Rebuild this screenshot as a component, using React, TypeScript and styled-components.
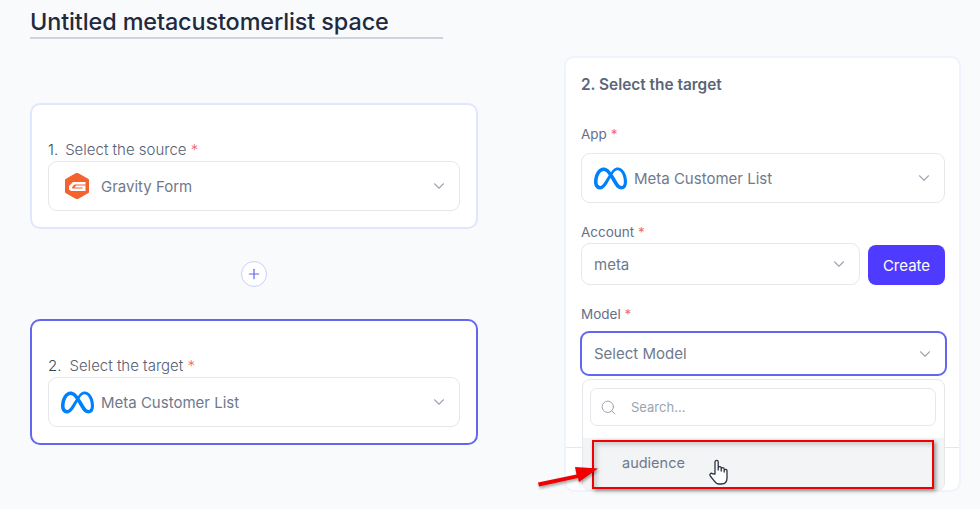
import React from 'react';
import styled, { createGlobalStyle } from 'styled-components';
import { ChevronDown, Plus, Search } from 'lucide-react';
import { SiMeta } from 'react-icons/si';

const GlobalStyle = createGlobalStyle`
    html, body {
        margin: 0;
        padding: 0;
        background: #f9fafc;
        font-family: Inter, "Noto Sans", sans-serif;
    }
    * { box-sizing: border-box; }
`
const Page = styled.div`
    position: relative;
    width: 980px;
    height: 509px;
    overflow: hidden;
    display: flex;
    align-items: flex-start;
    background: #f9fafc;
`
const LeftColumn = styled.div`
    width: 534px;
    margin-left: 30px;
    display: flex;
    flex-direction: column;
    flex: none;
`
const Title = styled.h1`
    width: 413px;
    height: 39px;
    margin: 0 0 64px;
    padding-top: 7px;
    border-bottom: 2px solid #d0d2dc;
    font-size: 23.4px;
    line-height: 30px;
    font-weight: 500;
    letter-spacing: -0.1px;
    white-space: nowrap;
    color: #1f2a3e;
`
const FlowCard = styled.section<{ $active?: boolean }>`
    width: 448px;
    height: 126px;
    padding: 33px 16px 0;
    background: #fff;
    border: 2px solid ${p => (p.$active ? '#6366f1' : '#e0e6fe')};
    border-radius: 10px;
`
const FlowLabel = styled.label`
    display: block;
    height: 23px;
    font-size: 15px;
    line-height: 24px;
    font-weight: 300;
    color: #566072;
`
const Number = styled.span<{ $gap: number }>`
    margin-right: ${p => p.$gap}px;
    color: #3d4654;
`
const Star = styled.span`
    color: #f26b6b;
`
const Select = styled.div<{ $h?: number; $focus?: boolean; $pad?: number }>`
    height: ${p => p.$h ?? 50}px;
    padding: 0 11px 0 ${p => p.$pad ?? 12}px;
    display: flex;
    align-items: center;
    background: #fff;
    border: ${p => (p.$focus ? '2px solid #6366f1' : '1px solid #e5e7eb')};
    border-radius: 9px;
    font-size: 15px;
    font-weight: 400;
    color: #6f798c;
`
const SelectText = styled.span`
    flex: 1;
`
const LogoSlot = styled.span<{ $w: number }>`
    width: ${p => p.$w}px;
    flex: none;
    display: flex;
    align-items: center;
`
const Connector = styled.div`
    width: 448px;
    height: 90px;
    display: flex;
    align-items: center;
    justify-content: center;
`
const PlusButton = styled.button`
    width: 26px;
    height: 26px;
    padding: 0;
    display: flex;
    align-items: center;
    justify-content: center;
    background: #fff;
    border: 1px solid #c9cffb;
    border-radius: 50%;
    color: #6366f1;
`
const Panel = styled.aside`
    position: relative;
    width: 397px;
    height: 436px;
    margin-top: 56px;
    padding: 16px 14px 0 15px;
    background: #fff;
    border: 2px solid #f0f2fd;
    border-radius: 10px;
`
const PanelTitle = styled.h2`
    margin: 0 0 28px;
    font-size: 15.4px;
    line-height: 22px;
    font-weight: 600;
    color: #5b6678;
`
const FieldLabel = styled.label<{ $mb: number }>`
    display: block;
    margin-bottom: ${p => p.$mb}px;
    font-size: 13.5px;
    line-height: 20px;
    color: #64708a;
`
const Field = styled.div<{ $mb: number }>`
    margin-bottom: ${p => p.$mb}px;
`
const AccountRow = styled.div`
    display: flex;
    align-items: flex-end;
    gap: 8px;
`
const AccountSelect = styled(Select)`
    width: 279px;
`
const CreateButton = styled.button`
    width: 77px;
    height: 40px;
    background: #4f3bff;
    border: 0;
    border-radius: 8px;
    font-family: inherit;
    font-size: 15px;
    color: #fff;
`
const ModelSelect = styled(Select)`
    width: 367px;
    margin-left: -1px;
`
const Divider = styled.div`
    position: absolute;
    left: 0;
    right: 0;
    top: 389px;
    height: 1px;
    background: #e5e7eb;
`
const Dropdown = styled.div`
    position: absolute;
    left: 16px;
    top: 321px;
    width: 363px;
    height: 112px;
    padding: 8px 8px 0 7px;
    background: #fff;
    border: 1px solid #e5e7eb;
    border-radius: 8px;
    overflow: hidden;
`
const SearchBox = styled.div`
    height: 38px;
    padding-left: 9px;
    display: flex;
    align-items: center;
    gap: 14px;
    border: 1px solid #e5e7eb;
    border-radius: 7px;
    font-size: 13px;
    color: #9ca3af;
`
const Option = styled.div`
    height: 52px;
    margin: 12px -8px 0 -7px;
    padding: 15px 0 0 39px;
    background: #f3f4f6;
    font-size: 14.5px;
    line-height: 20px;
    color: #6f798c;
`
const Highlight = styled.div`
    position: absolute;
    left: 592px;
    top: 440px;
    width: 342px;
    height: 49px;
    border: 2px solid #f00000;
    box-shadow: 2px 2px 4px rgba(0, 0, 0, 0.4), inset 3px 3px 4px rgba(0, 0, 0, 0.16);
`
const ArrowSvg = styled.svg`
    position: absolute;
    left: 538px;
    top: 465px;
    overflow: visible;
    filter: drop-shadow(1px 2px 1.5px rgba(0, 0, 0, 0.35));
`
const HandSvg = styled.svg`
    position: absolute;
    left: 708px;
    top: 458px;
    overflow: visible;
`

const ArrowMark = () => (
    <ArrowSvg width="62" height="24" viewBox="0 0 62 24">
        <path d="M0 17.5 L38.5 9.5 L37 2 L60 3.5 L41 17 L40 13 L1 21.5 Z" fill="#f00000" />
    </ArrowSvg>
)

const HandCursor = () => (
    <HandSvg width="22" height="28" viewBox="0 0 22 28">
        <path
            d="M7 16 V4 a1.6 1.6 0 0 1 3.2 0 V12 V10 a1.5 1.5 0 0 1 3 .3 V13 V11 a1.5 1.5 0 0 1 3 .3 V14 V12.6 a1.4 1.4 0 0 1 2.8 .2 V20 c0 3.5-2 6-5.5 6 H11 c-2.5 0-3.6-1.3-5-3.4 L2.3 18 c-1.4-2 .8-3.6 2.4-2.1 Z"
            fill="#fff"
            stroke="#2a3240"
            strokeWidth="1.3"
            strokeLinejoin="round"
        />
    </HandSvg>
)

const GravityLogo = () => (
    <svg width="24" height="26" viewBox="0 0 24 26">
        <path d="M12 0 L23.5 6.5 V19.5 L12 26 L.5 19.5 V6.5 Z" fill="#f4622d" stroke="#f4622d" strokeLinejoin="round" />
        <path
            d="M8 9 H20.5 V11.5 H9.5 L7.2 14 V15.5 H17.5 V14.4 H9.5 L11 12.6 H20.5 V18 H6 L4 16.5 V13 Z"
            fill="#fff"
        />
    </svg>
)

const Chevron = () => <ChevronDown size={18} color="#a0a6b2" strokeWidth={1.5} />

export default function App() {
    return (
        <Page>
            <GlobalStyle />
            <LeftColumn>
                <Title>Untitled metacustomerlist space</Title>
                <FlowCard>
                    <FlowLabel>
                        <Number $gap={7}>1.</Number>Select the source <Star>*</Star>
                    </FlowLabel>
                    <Select $pad={16}>
                        <LogoSlot $w={36}><GravityLogo /></LogoSlot>
                        <SelectText>Gravity Form</SelectText>
                        <Chevron />
                    </Select>
                </FlowCard>
                <Connector>
                    <PlusButton><Plus size={16} strokeWidth={1.8} /></PlusButton>
                </Connector>
                <FlowCard $active>
                    <FlowLabel>
                        <Number $gap={8}>2.</Number>Select the target <Star>*</Star>
                    </FlowLabel>
                    <Select>
                        <LogoSlot $w={40}><SiMeta size={33} color="#0081fb" /></LogoSlot>
                        <SelectText>Meta Customer List</SelectText>
                        <Chevron />
                    </Select>
                </FlowCard>
            </LeftColumn>
            <Panel>
                <PanelTitle>2. Select the target</PanelTitle>
                <Field $mb={19}>
                    <FieldLabel $mb={9}>App <Star>*</Star></FieldLabel>
                    <Select>
                        <LogoSlot $w={40}><SiMeta size={33} color="#0081fb" /></LogoSlot>
                        <SelectText>Meta Customer List</SelectText>
                        <Chevron />
                    </Select>
                </Field>
                <Field $mb={19}>
                    <FieldLabel $mb={1}>Account <Star>*</Star></FieldLabel>
                    <AccountRow>
                        <AccountSelect $h={42}>
                            <SelectText>meta</SelectText>
                            <Chevron />
                        </AccountSelect>
                        <CreateButton>Create</CreateButton>
                    </AccountRow>
                </Field>
                <FieldLabel $mb={7}>Model <Star>*</Star></FieldLabel>
                <ModelSelect $h={45} $focus>
                    <SelectText>Select Model</SelectText>
                    <Chevron />
                </ModelSelect>
                <Divider />
                <Dropdown>
                    <SearchBox>
                        <Search size={17} strokeWidth={1.4} />
                        Search...
                    </SearchBox>
                    <Option>audience</Option>
                </Dropdown>
            </Panel>
            <Highlight />
            <ArrowMark />
            <HandCursor />
        </Page>
    );
}
